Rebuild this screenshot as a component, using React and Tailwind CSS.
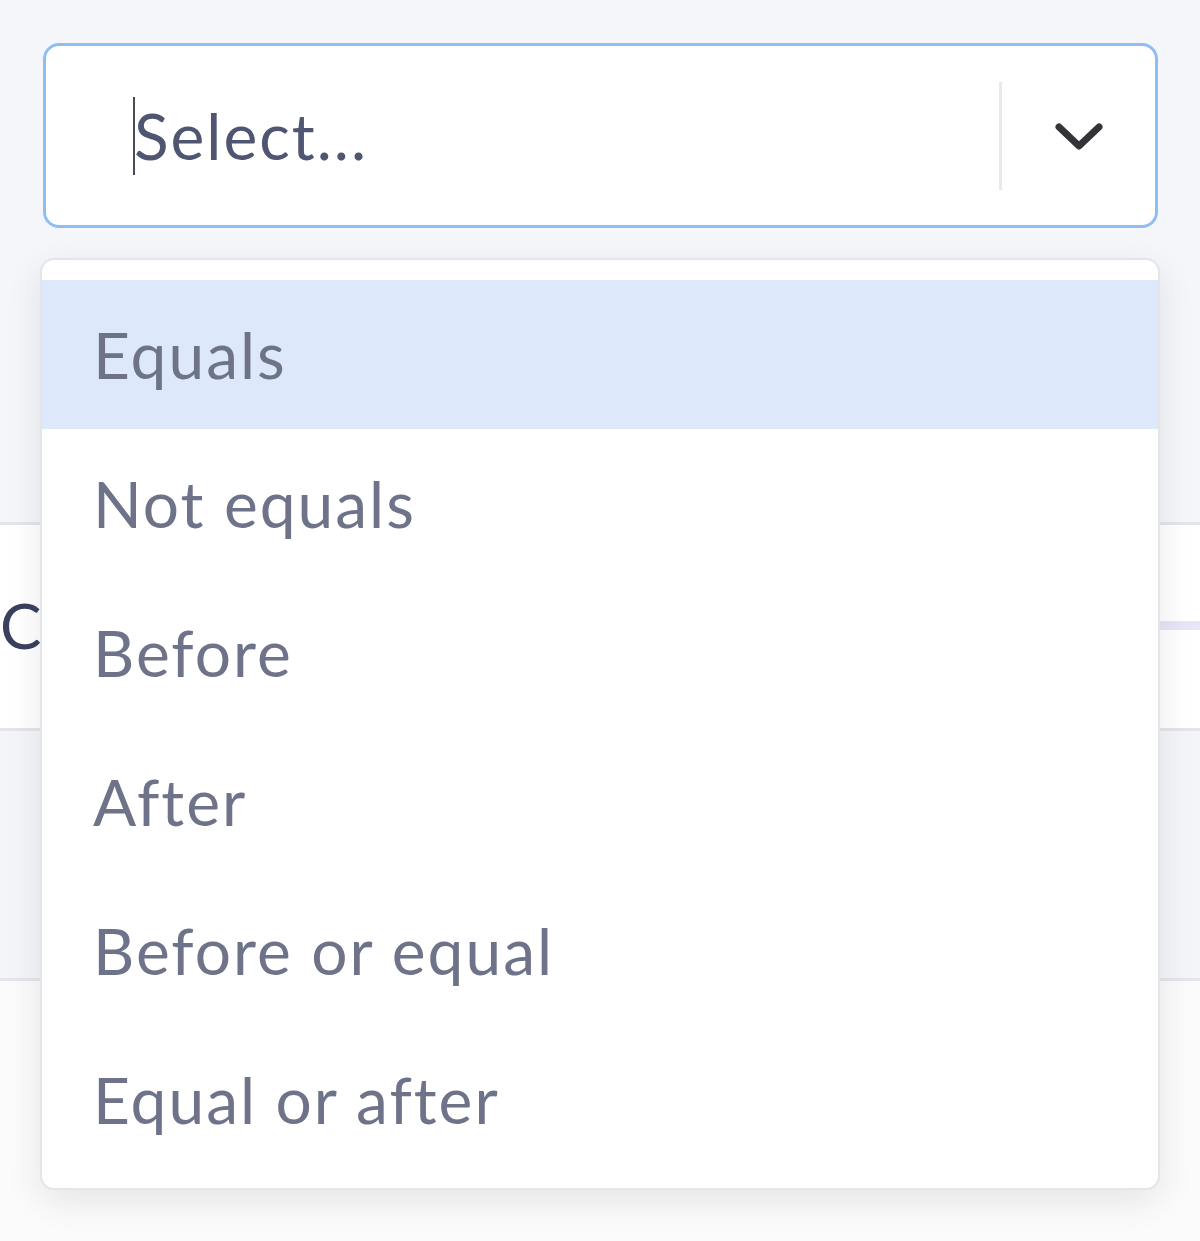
import { useState } from 'react';

const options = ['Equals', 'Not equals', 'Before', 'After', 'Before or equal', 'Equal or after'];

const App = () => {
  const [active, setActive] = useState(0);

  return (
    <div className="relative w-[1200px] h-[1241px] overflow-hidden bg-[#f5f6fa] font-['Lato',sans-serif]">
      {/* Select control */}
      <div className="pt-[43px] pl-[43px]">
        <div className="w-[1115px] h-[185px] rounded-[16px] border-[3px] border-[#8fbdf5] bg-white flex items-center">
          <div className="flex-1 flex items-center pl-[87px]">
            <span className="w-[2px] h-[78px] bg-[#4a4a55] -mr-[1px]"></span>
            <span className="text-[64px] leading-none text-[#505672] tracking-[2px]">Select...</span>
          </div>
          <div className="w-[3px] h-[108px] bg-[#e8eaf2]"></div>
          <div className="w-[153px] flex items-center justify-center">
            <svg width="50" height="32" viewBox="0 0 50 32" fill="none">
              <path d="M5 7 L25 26 L45 7" stroke="#333338" strokeWidth="7" strokeLinecap="round" strokeLinejoin="round" />
            </svg>
          </div>
        </div>
      </div>

      {/* Table behind the menu */}
      <div className="mt-[294px]">
        <div className="border-t-[3px] border-[#e3e5eb] bg-white h-[206px] flex flex-col">
          <div className="h-[70px]"></div>
          <div className="flex items-center h-[60px]">
            <span className="text-[62px] leading-none text-[#3b4060]">C</span>
            <div className="flex-1"></div>
            <div className="w-[60px] h-[9px] bg-[#e6e6f8]"></div>
          </div>
          <div className="flex-1"></div>
        </div>
        <div className="border-t-[3px] border-[#e3e5eb] bg-[#f3f5f9] h-[250px]"></div>
        <div className="border-t-[3px] border-[#e3e5eb] bg-[#fbfbfc] h-[270px]"></div>
      </div>

      {/* Dropdown menu */}
      <div className="absolute left-[40px] top-[258px] w-[1120px] h-[932px] rounded-[14px] border-2 border-[#e4e5ea] bg-white pt-[20px] shadow-[0_12px_36px_rgba(0,0,0,0.09)]">
        {options.map((opt, i) => (
          <div
            key={opt}
            onMouseEnter={() => setActive(i)}
            className={`h-[149px] flex items-center pl-[51px] text-[64px] leading-none text-[#6e7389] tracking-[2px] ${active === i ? 'bg-[#dde9fb]' : 'bg-white'}`}
          >
            {opt}
          </div>
        ))}
      </div>
    </div>
  );
};

export default App;
